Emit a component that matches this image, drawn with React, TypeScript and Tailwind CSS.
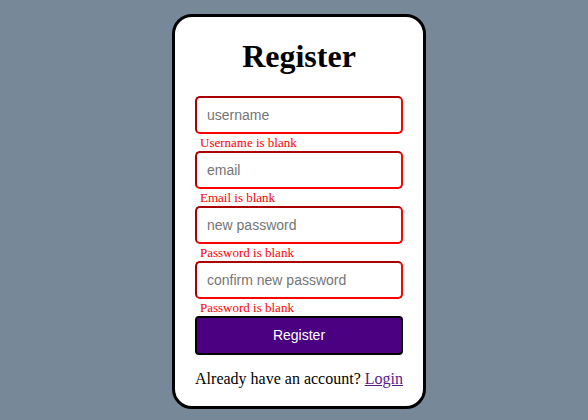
import React from 'react';

const fields = [
  { placeholder: 'username', type: 'text', error: 'Username is blank' },
  { placeholder: 'email', type: 'email', error: 'Email is blank' },
  { placeholder: 'new password', type: 'password', error: 'Password is blank' },
  { placeholder: 'confirm new password', type: 'password', error: 'Password is blank' },
];

const App: React.FC = () => {
  return (
    <div className="min-h-screen bg-[#778899] flex justify-center pl-[10px] py-[14px] font-['Liberation_Serif',serif]">
      <form className="w-[254px] h-[395px] bg-white border-[3px] border-black rounded-[20px] px-[20px] pt-[21px] flex flex-col">
        <h1 className="text-[32px] leading-[36px] font-bold text-black text-center mb-[22px]">Register</h1>

        {fields.map(field => (
          <div key={field.placeholder} className="flex flex-col">
            <input
              type={field.type}
              placeholder={field.placeholder}
              className="w-full h-[38px] border-2 [border-style:inset] border-[#ff0000] rounded-[5px] px-[10px] text-[14px] font-['Liberation_Sans',sans-serif] placeholder:text-[#757575] focus:outline-none"
            />
            <span className="pl-[5px] text-[13px] leading-[17px] text-[#ff0000]">{field.error}</span>
          </div>
        ))}

        <button
          type="button"
          className="w-full h-[39px] bg-[#4b0082] border-2 border-black rounded-[4px] text-white text-[14px] font-['Liberation_Sans',sans-serif]"
        >
          Register
        </button>

        <p className="mt-[15px] text-[16px] leading-[18px] text-black text-center">
          Already have an account? <a href="#" className="text-[#551a8b] underline">Login</a>
        </p>
      </form>
    </div>
  );
};

export default App;
